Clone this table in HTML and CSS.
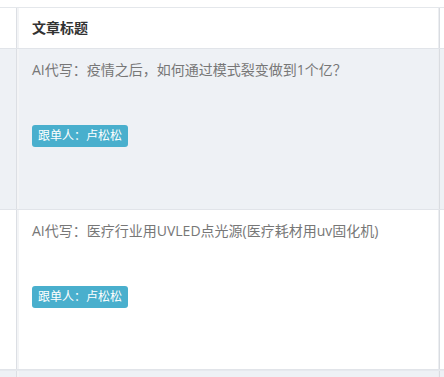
FILE: index.html
```html
<!DOCTYPE html>
<html lang="zh-CN">
<head>
<meta charset="utf-8">
<title>文章列表</title>
<link rel="stylesheet" href="styles.css">
</head>
<body>
<div class="grid">
  <div class="row head">
    <div class="cell side"></div>
    <div class="cell main"><span class="th">文章标题</span></div>
    <div class="cell tail"></div>
  </div>
  <div class="row item shade">
    <div class="cell side"></div>
    <div class="cell main">
      <div class="title">AI代写：疫情之后，如何通过模式裂变做到1个亿？</div>
      <span class="tag">跟单人：卢松松</span>
    </div>
    <div class="cell tail"></div>
  </div>
  <div class="row item">
    <div class="cell side"></div>
    <div class="cell main">
      <div class="title">AI代写：医疗行业用UVLED点光源(医疗耗材用uv固化机)</div>
      <span class="tag">跟单人：卢松松</span>
    </div>
    <div class="cell tail"></div>
  </div>
  <div class="row foot shade">
    <div class="cell side"></div>
    <div class="cell main"></div>
    <div class="cell tail"></div>
  </div>
</div>
</body>
</html>
```

FILE: styles.css
```css
html, body {
  margin: 0;
  padding: 0;
  background: #fff;
}

body {
  font-family: "Open Sans", "Noto Sans CJK SC", sans-serif;
  font-size: 14px;
  color: #777;
}

.grid {
  margin-top: 7px;
  border-top: 1px solid #e4e7eb;
}

.row {
  display: flex;
  border-bottom: 1px solid #e1e4e9;
}

.cell.side {
  width: 16px;
  border-right: 1px solid #dcdfe4;
  flex: none;
}

.cell.main {
  flex: 1;
  padding-left: 13px;
  border-left: 2px solid #f3f4f6;
  border-right: 1px solid #d9dce1;
  box-shadow: inset -5px 0 0 -4px #eceef1;
}

.cell.tail {
  width: 4px;
  flex: none;
}

.head {
  height: 40px;
}

.head .main {
  display: flex;
  align-items: center;
}

.th {
  font-weight: bold;
  color: #333;
  line-height: 20px;
}

.item {
  height: 160px;
}

.item + .item {
  height: 159px;
}

.item .main {
  padding-top: 11px;
}

.shade {
  background: #eef1f5;
}

.title {
  line-height: 20px;
  color: #777;
  white-space: nowrap;
}

.tag {
  display: inline-block;
  margin-top: 45px;
  height: 22px;
  line-height: 22px;
  padding: 0 6px;
  border-radius: 3px;
  background: #49afcd;
  color: #fff;
  font-size: 12px;
}

.foot {
  height: 12px;
  border-top: 1px solid #e6e9ee;
}
```
